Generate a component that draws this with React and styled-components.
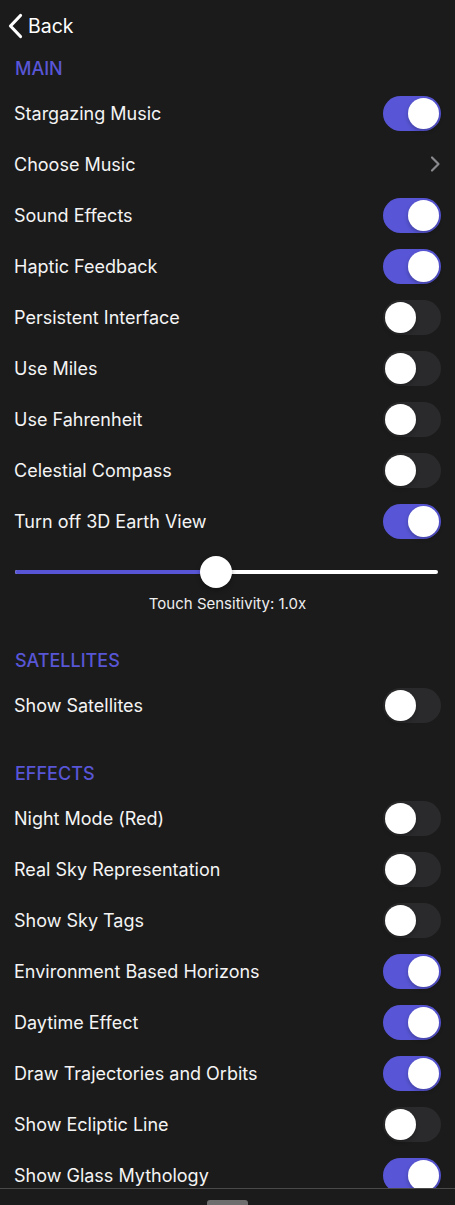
import React from "react";
import styled, { createGlobalStyle } from "styled-components";

const GlobalStyle = createGlobalStyle`
  html, body {
    margin: 0;
    padding: 0;
    background: #1b1b1b;
  }
  body {
    font-family: Inter, "Liberation Sans", sans-serif;
    color: #ffffff;
    -webkit-font-smoothing: antialiased;
  }
`;

const ACCENT = "#5856d6";

const main = [
  { label: "Stargazing Music", on: true },
  { label: "Choose Music", link: true },
  { label: "Sound Effects", on: true },
  { label: "Haptic Feedback", on: true },
  { label: "Persistent Interface", on: false },
  { label: "Use Miles", on: false },
  { label: "Use Fahrenheit", on: false },
  { label: "Celestial Compass", on: false },
  { label: "Turn off 3D Earth View", on: true },
];

const satellites = [{ label: "Show Satellites", on: false }];

const effects = [
  { label: "Night Mode (Red)", on: false },
  { label: "Real Sky Representation", on: false },
  { label: "Show Sky Tags", on: false },
  { label: "Environment Based Horizons", on: true },
  { label: "Daytime Effect", on: true },
  { label: "Draw Trajectories and Orbits", on: true },
  { label: "Show Ecliptic Line", on: false },
  { label: "Show Glass Mythology", on: true },
];

function Toggle({ on }) {
  return (
    <Track $on={on}>
      <Knob $on={on} />
    </Track>
  );
}

function Row({ item }) {
  return (
    <RowStyled>
      <RowLabel>{item.label}</RowLabel>
      {item.link ? (
        <svg width="12" height="18" viewBox="0 0 12 18">
          <path
            d="M3 2.5 L9.5 9 L3 15.5"
            fill="none"
            stroke="#8a8a8e"
            strokeWidth="2.2"
            strokeLinecap="round"
            strokeLinejoin="round"
          />
        </svg>
      ) : (
        <Toggle on={item.on} />
      )}
    </RowStyled>
  );
}

function Section({ title, items, gap }) {
  return (
    <SectionStyled $gap={gap}>
      <SectionTitle>{title}</SectionTitle>
      {items.map((it) => (
        <Row key={it.label} item={it} />
      ))}
    </SectionStyled>
  );
}

export default function App() {
  const value = 0.475;
  return (
    <Page>
      <GlobalStyle />
      <TopBar>
        <svg width="16" height="26" viewBox="0 0 16 26">
          <path
            d="M12.5 2.5 L2.5 13 L12.5 23.5"
            fill="none"
            stroke="#ffffff"
            strokeWidth="3.2"
            strokeLinecap="round"
            strokeLinejoin="round"
          />
        </svg>
        <BackText>Back</BackText>
      </TopBar>

      <Section title="MAIN" items={main} gap={0} />

      <SliderBlock>
        <SliderTrack>
          <SliderFill style={{ width: `${value * 100}%` }} />
          <SliderThumb style={{ left: `${value * 100}%` }} />
        </SliderTrack>
        <SliderLabel>Touch Sensitivity: 1.0x</SliderLabel>
      </SliderBlock>

      <Section title="SATELLITES" items={satellites} gap={28.5} />
      <Section title="EFFECTS" items={effects} gap={24.5} />

      <BottomBar>
        <HomeIndicator />
      </BottomBar>
    </Page>
  );
}

const Page = styled.div`
  min-height: 100vh;
  background: #1b1b1b;
  padding-bottom: 40px;
`;

const TopBar = styled.div`
  height: 50px;
  display: flex;
  align-items: center;
  gap: 4px;
  padding: 1px 0 0 8px;
  box-sizing: border-box;
`;

const BackText = styled.span`
  font-size: 19.5px;
  color: #ffffff;
`;

const SectionStyled = styled.section`
  margin-top: ${(p) => p.$gap}px;
  padding-top: 7px;
`;

const SectionTitle = styled.div`
  padding: 0 15px;
  height: 24px;
  line-height: 24px;
  margin-bottom: 6.5px;
  font-size: 18px;
  font-weight: 500;
  color: ${ACCENT};
`;

const RowStyled = styled.div`
  height: 51px;
  display: flex;
  align-items: center;
  justify-content: space-between;
  padding: 0 14px 0 14px;
`;

const RowLabel = styled.span`
  font-size: 18px;
  color: #f4f4f4;
`;

const Track = styled.div`
  width: 58px;
  height: 35px;
  border-radius: 18px;
  background: ${(p) => (p.$on ? ACCENT : "#2a2a2c")};
  position: relative;
  flex-shrink: 0;
`;

const Knob = styled.div`
  position: absolute;
  top: 2px;
  left: ${(p) => (p.$on ? "25px" : "2px")};
  width: 31px;
  height: 31px;
  border-radius: 50%;
  background: #ffffff;
  box-shadow: 0 2px 4px rgba(0, 0, 0, 0.25);
`;

const SliderBlock = styled.div`
  padding: 9px 17px 0 15px;
`;

const SliderTrack = styled.div`
  position: relative;
  height: 32px;
  display: flex;
  align-items: center;
  &::before {
    content: "";
    position: absolute;
    left: 0;
    right: 0;
    top: 14px;
    height: 4px;
    border-radius: 2px;
    background: #ffffff;
  }
`;

const SliderFill = styled.div`
  position: absolute;
  left: 0;
  top: 14px;
  height: 4px;
  border-radius: 2px;
  background: ${ACCENT};
`;

const SliderThumb = styled.div`
  position: absolute;
  top: 0;
  width: 32px;
  height: 32px;
  margin-left: -16px;
  border-radius: 50%;
  background: #ffffff;
  box-shadow: 0 2px 5px rgba(0, 0, 0, 0.3);
`;

const SliderLabel = styled.div`
  margin-top: 6px;
  line-height: 20px;
  text-align: center;
  font-size: 15px;
  color: #eeeeee;
  padding-left: 2px;
`;

const BottomBar = styled.div`
  position: fixed;
  left: 0;
  right: 0;
  bottom: 0;
  height: 16px;
  background: #1b1b1b;
  border-top: 1px solid #4a4a4a;
  display: flex;
  justify-content: center;
  overflow: hidden;
`;

const HomeIndicator = styled.div`
  margin-top: 11px;
  width: 41px;
  height: 10px;
  border-radius: 3px;
  background: #6e6e6e;
`;
